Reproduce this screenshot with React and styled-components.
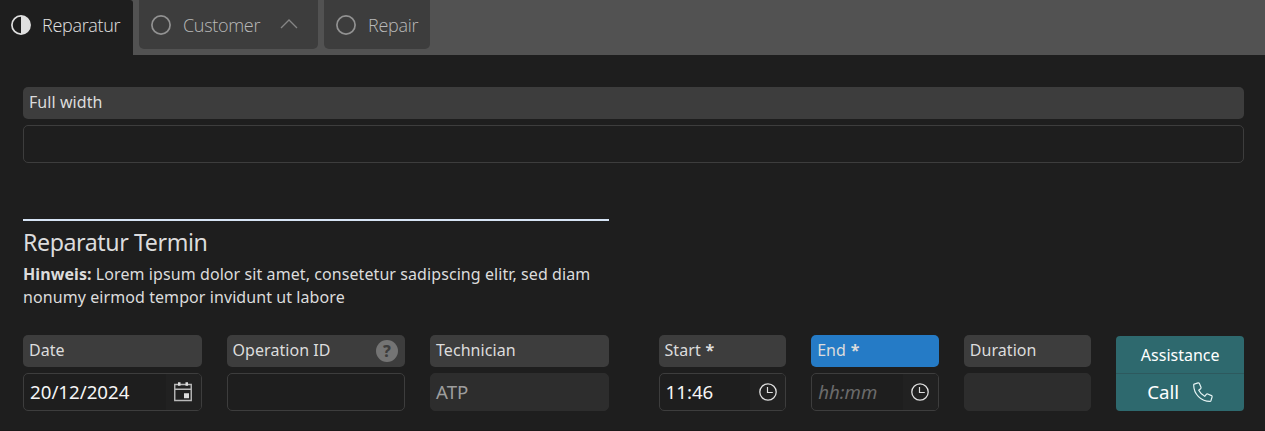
import React from "react";
import styled, { createGlobalStyle, css } from "styled-components";

const GlobalStyle = createGlobalStyle`
  *, *::before, *::after { box-sizing: border-box; }
  html, body { margin: 0; background: #1e1e1e; overflow: hidden; }
  body { font-family: "Noto Sans", "Open Sans", sans-serif; font-size: 16px; color: #dcdcdc; }
`;

const Page = styled.div`
  height: 431px;
  background: #1e1e1e;
  border-bottom: 1px solid #1a1819;
`;

const TabBar = styled.nav`
  display: flex;
  gap: 6px;
  height: 55px;
  background: #525252;
`;

const Tab = styled.div`
  display: flex;
  align-items: center;
  gap: 12px;
  width: ${(p) => p.$width}px;
  height: 49px;
  padding: 1px 0 0 12px;
  border-radius: 0 0 5px 5px;
  background: #3d3d3d;
  color: #b9b9b9;
  font-family: "Open Sans", "Noto Sans", sans-serif;
  font-size: 18px;
  font-weight: 300;
  letter-spacing: -0.3px;
  ${(p) =>
    p.$active &&
    css`
      gap: 11px;
      height: 55px;
      padding-bottom: 6px;
      padding-left: 11px;
      border-radius: 0 3px 0 0;
      background: #1e1e1e;
      color: #e2e2e2;
    `}

  svg { flex: none; }
`;

const ChevronIcon = styled.svg`
  margin-left: 8px;
  margin-top: -2px;
`;

const Content = styled.main`
  padding: 32px 21px 0 23px;
`;

const Field = styled.div`
  display: flex;
  flex-direction: column;
  gap: 6px;
  min-width: 0;
`;

const Label = styled.div`
  display: flex;
  align-items: center;
  justify-content: space-between;
  height: 32px;
  padding: 0 7px 2px 6px;
  border-radius: 5px;
  background: ${(p) => (p.$focus ? "#257bc6" : "#3d3d3d")};
  letter-spacing: 0.06px;
  white-space: pre;
`;

const LabelText = styled.span`
  b { font-weight: 700; margin-left: 0.5px; }
`;

const HelpBadge = styled.span`
  display: grid;
  place-items: center;
  width: 22px;
  height: 22px;
  margin-top: 2px;
  border-radius: 50%;
  background: #747474;
  color: #3d3d3d;
  font-size: 16px;
  font-weight: 800;
  line-height: 21px;
`;

const Input = styled.div`
  display: flex;
  align-items: stretch;
  justify-content: space-between;
  height: 38px;
  padding-left: ${(p) => (p.$disabled ? 5 : 6)}px;
  border: 1px solid ${(p) => (p.$disabled ? "#2d2d2d" : "#3d3d3d")};
  border-radius: 5px;
  background: ${(p) => (p.$disabled ? "#2d2d2d" : "#1e1e1e")};
  color: ${(p) => (p.$disabled ? "#9d9d9d" : "#f5f5f5")};
  font-size: 18.7px;
  line-height: 36px;
  overflow: hidden;
`;

const Placeholder = styled.span`
  color: #6b6b6b;
  font-style: italic;
`;

const PickerButton = styled.span`
  display: grid;
  place-items: center;
  width: 35px;
  background: #212121;
`;

const Halves = styled.div`
  display: grid;
  grid-template-columns: 1fr 1fr;
  column-gap: 50px;
`;

const Section = styled.section`
  height: 116px;
  margin-top: 56px;
  border-top: 2px solid #d6e4f5;
`;

const Title = styled.h2`
  margin: 4px 0 0;
  font-size: 23.2px;
  font-weight: 400;
  line-height: 35px;
  letter-spacing: -0.42px;
  color: #dcdcdc;
`;

const Note = styled.p`
  margin: 3px 0 0;
  line-height: 23px;
  letter-spacing: 0.08px;
`;

const FieldRow = styled.div`
  display: grid;
  grid-template-columns: repeat(${(p) => p.$columns}, minmax(0, 1fr));
  column-gap: 25px;
`;

const ActionGroup = styled.div`
  display: flex;
  flex-direction: column;
  height: 75px;
  margin-top: 1px;
  border-radius: 4px;
  background: #2e696e;
  color: #ffffff;
  overflow: hidden;
`;

const ActionLabel = styled.div`
  height: 38px;
  padding-top: 1px;
  border-bottom: 1px solid #2d595e;
  line-height: 36px;
  text-align: center;
`;

const ActionButton = styled.div`
  display: flex;
  align-items: center;
  justify-content: center;
  gap: 14px;
  height: 35px;
  font-size: 18.7px;
`;

const CircleIcon = ({ half }) => (
  <svg width="20" height="20" viewBox="0 0 20 20" fill="none">
    <circle cx="10" cy="10" r="9.1" stroke={half ? "#e0e0e0" : "#929292"} strokeWidth="1.7" />
    {half && <path d="M10 1a9 9 0 0 1 0 18z" fill="#e0e0e0" />}
  </svg>
);

const CalendarIcon = () => (
  <svg width="18" height="20" viewBox="0 0 18 20" fill="none">
    <path d="M.75 2.5h16.5v16H.75zM.75 7.2h16.5" stroke="#b9b9b9" strokeWidth="1.4" />
    <path d="M4 .2h2.5v3.6H4zM11.5.2H14v3.6h-2.5zM10 11.3h5v5h-5z" fill="#dedede" />
  </svg>
);

const ClockIcon = () => (
  <svg width="18" height="18" viewBox="0 0 18 18" fill="none" stroke="#dedede">
    <circle cx="9" cy="9" r="8.2" strokeWidth="1.3" />
    <path d="M8.5 4v5.5h5.3" strokeWidth="1.2" />
  </svg>
);

const PhoneIcon = () => (
  <svg width="20" height="20" viewBox="0 0 20 20" fill="none" stroke="#e5f3f3" strokeWidth="1.2" strokeLinejoin="round">
    <path d="M1.2 2.1 5.1.9Q6 .7 6.4 1.5L8 5.3Q8.3 6.1 7.6 6.7L5.7 8.3Q7.8 12.3 11.7 14.3L13.3 12.4Q13.9 11.7 14.7 12L18.5 13.6Q19.3 14 19.1 14.9L17.9 18.8Q17.7 19.4 17 19.4C8 19.4.7 12 .7 3Q.7 2.3 1.2 2.1z" />
  </svg>
);

const FormField = ({ label, required, help, focus, disabled, value, placeholder, picker }) => (
  <Field>
    <Label $focus={focus}>
      <LabelText>
        {label}
        {required && <b> *</b>}
      </LabelText>
      {help && <HelpBadge>?</HelpBadge>}
    </Label>
    <Input $disabled={disabled}>
      {placeholder ? <Placeholder>{placeholder}</Placeholder> : <span>{value}</span>}
      {picker && <PickerButton>{picker}</PickerButton>}
    </Input>
  </Field>
);

export default function App() {
  return (
    <Page>
      <GlobalStyle />
      <TabBar>
        <Tab $active $width={133}>
          <CircleIcon half />
          Reparatur
        </Tab>
        <Tab $width={179}>
          <CircleIcon />
          Customer
          <ChevronIcon width="18" height="10" viewBox="0 0 18 10" fill="none">
            <path d="M1 9 9 1l8 8" stroke="#858585" strokeWidth="1.3" />
          </ChevronIcon>
        </Tab>
        <Tab $width={106}>
          <CircleIcon />
          Repair
        </Tab>
      </TabBar>
      <Content>
        <FormField label="Full width" />
        <Halves>
          <Section>
            <Title>Reparatur Termin</Title>
            <Note>
              <b>Hinweis:</b> Lorem ipsum dolor sit amet, consetetur sadipscing elitr, sed diam nonumy eirmod tempor invidunt ut labore
            </Note>
          </Section>
        </Halves>
        <Halves>
          <FieldRow $columns={3}>
            <FormField label="Date" value="20/12/2024" picker={<CalendarIcon />} />
            <FormField label="Operation ID" help />
            <FormField label="Technician" value="ATP" disabled />
          </FieldRow>
          <FieldRow $columns={4}>
            <FormField label="Start" required value="11:46" picker={<ClockIcon />} />
            <FormField label="End" required focus placeholder="hh:mm" picker={<ClockIcon />} />
            <FormField label="Duration" disabled />
            <ActionGroup>
              <ActionLabel>Assistance</ActionLabel>
              <ActionButton>
                Call
                <PhoneIcon />
              </ActionButton>
            </ActionGroup>
          </FieldRow>
        </Halves>
      </Content>
    </Page>
  );
}
